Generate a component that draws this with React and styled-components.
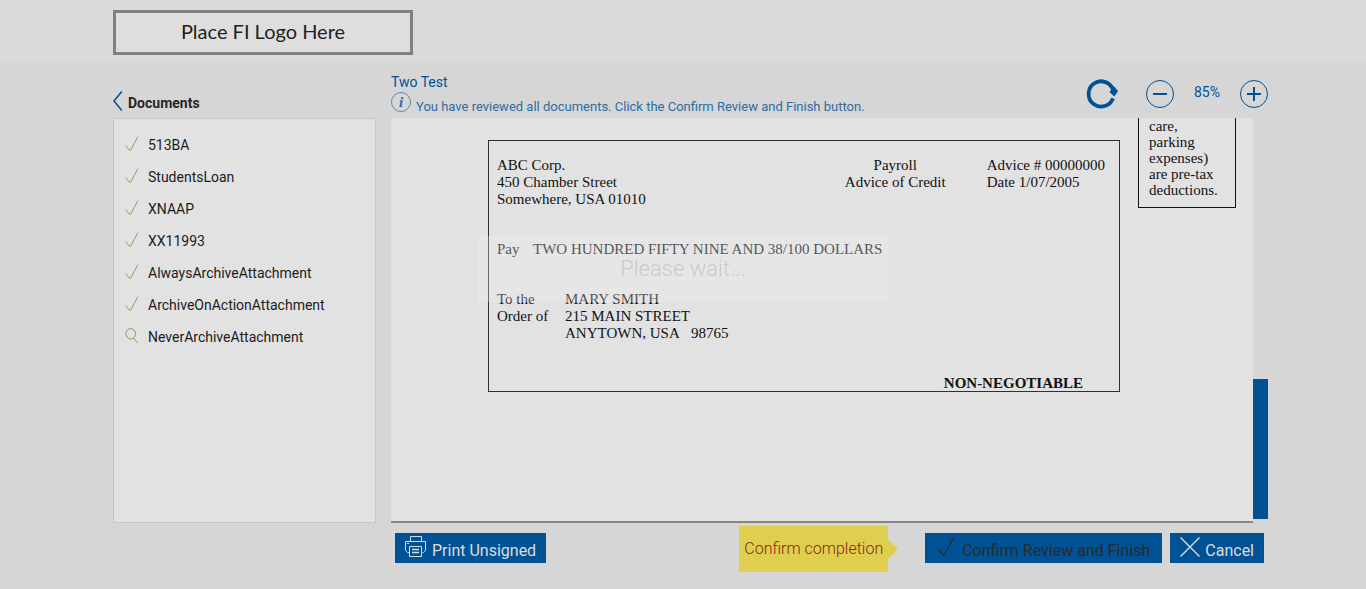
import React, { useState } from 'react'
import styled, { createGlobalStyle } from 'styled-components'

const blue = '#005294';

const documents = [
    { name: '513BA', reviewed: true },
    { name: 'StudentsLoan', reviewed: true },
    { name: 'XNAAP', reviewed: true },
    { name: 'XX11993', reviewed: true },
    { name: 'AlwaysArchiveAttachment', reviewed: true },
    { name: 'ArchiveOnActionAttachment', reviewed: true },
    { name: 'NeverArchiveAttachment', reviewed: false },
];

function CheckIcon({ width, height, color }) {
    return (
        <svg width={width} height={height} viewBox="0 0 14 16" fill="none" stroke={color} aria-hidden="true">
            <path d="M0.7 9.7 L5.2 14.8 L13 0.5" />
        </svg>
    )
}

function SearchIcon() {
    return (
        <svg width="14" height="16" viewBox="0 0 14 16" fill="none" stroke="#7fa253" aria-hidden="true">
            <ellipse cx="5.7" cy="5.8" rx="4.8" ry="5.2" />
            <path d="M8.6 10.2 L12.6 15.2" />
        </svg>
    )
}

function PrintIcon() {
    return (
        <svg width="22" height="22" viewBox="0 0 22 22" fill="none" stroke="#cfdbe5" aria-hidden="true">
            <path d="M5.5 5.5 V0.5 H16.5 V5.5" />
            <path d="M4.5 16.5 H2.5 L0.5 14.5 V5.5 H20.5 V14.5 L18.5 16.5 H17.5" />
            <path d="M4.5 20.5 V10.5 H16.5 V20.5 Z" />
            <path d="M7 13.5 H14 M7 16.5 H14" strokeWidth="1.3" />
            <path d="M2 7.5 H4" />
        </svg>
    )
}

function ReviewPage() {
    const [zoom, setZoom] = useState(85);

    return (
        <Page>
            <Header>
                <Container>
                    <Logo>Place FI Logo Here</Logo>
                </Container>
            </Header>
            <Container>
                <Columns>
                    <Sidebar>
                        <SidebarTitle>
                            <BackButton type="button" aria-label="Back">
                                <svg width="10" height="20" viewBox="0 0 10 20" fill="none" stroke={blue} strokeWidth="1.5">
                                    <path d="M8.8 0.5 L1 10 L8.8 19.5" />
                                </svg>
                            </BackButton>
                            <h2>Documents</h2>
                        </SidebarTitle>
                        <DocumentList>
                            {documents.map(doc => (
                                <li key={doc.name}>
                                    <DocumentLink href="#">
                                        {doc.reviewed ? <CheckIcon width="14" height="16" color="#82a858" /> : <SearchIcon />}
                                        <span>{doc.name}</span>
                                    </DocumentLink>
                                </li>
                            ))}
                        </DocumentList>
                    </Sidebar>

                    <Viewer>
                        <ViewerHeader>
                            <div>
                                <ViewerTitle>Two Test</ViewerTitle>
                                <Message>
                                    <InfoIcon>i</InfoIcon>
                                    <p>You have reviewed all documents. Click the Confirm Review and Finish button.</p>
                                </Message>
                            </div>
                            <Tools>
                                <RefreshButton type="button" aria-label="Rotate">
                                    <svg width="32" height="30" viewBox="0 0 32 30" fill="none">
                                        <path d="M27 10.5 A12.6 12.6 0 1 0 27 19.3" stroke={blue} strokeWidth="3.8" />
                                        <path d="M23.4 13 L28.2 7.6 L32 12 L28.4 17.4 Z" fill={blue} />
                                    </svg>
                                </RefreshButton>
                                <RoundButton type="button" aria-label="Zoom out" onClick={() => setZoom(zoom - 5)}>
                                    <svg width="14" height="14" stroke={blue} strokeWidth="2"><path d="M0 7 H14" /></svg>
                                </RoundButton>
                                <ZoomValue>{zoom}%</ZoomValue>
                                <RoundButton type="button" aria-label="Zoom in" onClick={() => setZoom(zoom + 5)}>
                                    <svg width="14" height="14" stroke={blue} strokeWidth="2"><path d="M0 7 H14 M7 0 V14" /></svg>
                                </RoundButton>
                            </Tools>
                        </ViewerHeader>

                        <ViewerBody>
                            <Paper>
                                <Check>
                                    <CheckTop>
                                        <Company>ABC Corp.<br />450 Chamber Street<br />Somewhere, USA 01010</Company>
                                        <CheckKind>Payroll<br />Advice of Credit</CheckKind>
                                        <div>Advice # 00000000<br />Date 1/07/2005</div>
                                    </CheckTop>
                                    <CheckRow $label="36px">
                                        <div>Pay</div>
                                        <div>TWO HUNDRED FIFTY NINE AND 38/100 DOLLARS</div>
                                    </CheckRow>
                                    <CheckRow $label="68px">
                                        <div>To the<br />Order of</div>
                                        <div>MARY SMITH<br />215 MAIN STREET<br />ANYTOWN, USA&nbsp;&nbsp; 98765</div>
                                    </CheckRow>
                                    <NonNegotiable>NON-NEGOTIABLE</NonNegotiable>
                                </Check>
                                <SideNote>care,<br />parking<br />expenses)<br />are pre-tax<br />deductions.</SideNote>
                            </Paper>
                            <ScrollTrack>
                                <ScrollThumb />
                            </ScrollTrack>
                        </ViewerBody>

                        <Actions>
                            <ActionButton type="button">
                                <PrintIcon />
                                <span>Print Unsigned</span>
                            </ActionButton>
                            <ActionGroup>
                                <ConfirmWrapper>
                                    <Tooltip role="tooltip">Confirm completion</Tooltip>
                                    <ActionButton type="button" $dark>
                                        <CheckIcon width="18" height="20" color="#2b2b2b" />
                                        <span>Confirm Review and Finish</span>
                                    </ActionButton>
                                </ConfirmWrapper>
                                <ActionButton type="button">
                                    <svg width="20" height="20" viewBox="0 0 20 20" stroke="#dddddd" strokeWidth="1.4" aria-hidden="true">
                                        <path d="M0.5 0.5 L19.5 19.5 M19.5 0.5 L0.5 19.5" />
                                    </svg>
                                    <span>Cancel</span>
                                </ActionButton>
                            </ActionGroup>
                        </Actions>
                    </Viewer>
                </Columns>
            </Container>
            <WaitBox role="status">Please wait...</WaitBox>
        </Page>
    )
}

function App() {
    return (
        <>
            <GlobalStyle />
            <ReviewPage />
        </>
    )
}

const GlobalStyle = createGlobalStyle`
    * {
        box-sizing: border-box;
    }
    body {
        margin: 0;
        background: #d6d6d6;
        font-family: Roboto, "Liberation Sans", sans-serif;
    }
    button {
        font-family: inherit;
        border: none;
        padding: 0;
        cursor: pointer;
    }
    svg {
        display: block;
        flex-shrink: 0;
    }
`;

const Page = styled.div`
    min-height: 100vh;
    background: #d6d6d6;
`;

const Container = styled.div`
    max-width: 1170px;
    margin: 0 auto;
    padding-left: 15px;
`;

const Header = styled.header`
    background: #dadada;
    padding: 10px 0 7px;
`;

const Logo = styled.div`
    display: flex;
    align-items: center;
    justify-content: center;
    width: 300px;
    height: 45px;
    padding-bottom: 4px;
    border: 3px solid #808080;
    background: #dedede;
    color: #231f20;
    font-family: Lato, sans-serif;
    font-size: 20px;
`;

const Columns = styled.div`
    display: grid;
    grid-template-columns: 263px 1fr;
    gap: 15px;
`;

const Sidebar = styled.aside`
    display: flex;
    flex-direction: column;
    padding-bottom: 50px;
`;

const SidebarTitle = styled.div`
    display: flex;
    align-items: flex-end;
    gap: 5px;
    height: 56px;
    padding-bottom: 7px;
    h2{
        margin: 0;
        color: #262626;
        font-size: 14px;
        line-height: 16px;
        font-weight: 700;
    }
`;

const BackButton = styled.button`
    background: none;
`;

const DocumentList = styled.ul`
    flex: 1;
    margin: 0;
    padding: 10px 11px;
    list-style: none;
    border: 1px solid #c6c6c6;
    background: #e2e2e2;
`;

const DocumentLink = styled.a`
    display: flex;
    align-items: center;
    gap: 9px;
    height: 32px;
    color: #1c1c1c;
    font-size: 14px;
    text-decoration: none;
    svg{
        margin-bottom: 2px;
    }
`;

const Viewer = styled.main`
    min-width: 0;
`;

const ViewerHeader = styled.div`
    display: flex;
    justify-content: space-between;
    height: 56px;
    padding-top: 12px;
    color: ${blue};
`;

const ViewerTitle = styled.h1`
    margin: 0;
    font-size: 14px;
    line-height: 16px;
    font-weight: 400;
`;

const Message = styled.div`
    display: flex;
    gap: 5px;
    color: #2f6ba3;
    font-size: 13px;
    line-height: 16px;
    padding-top: 2px;
    p{
        margin: 0;
        padding-top: 7px;
    }
`;

const InfoIcon = styled.span`
    display: flex;
    align-items: center;
    justify-content: center;
    width: 20px;
    height: 20px;
    border: 1px solid #5b87b3;
    border-radius: 50%;
    font-family: "Liberation Serif", serif;
    font-size: 15px;
    font-style: italic;
    font-weight: 700;
`;

const Tools = styled.div`
    display: flex;
    align-items: center;
    gap: 20px;
    height: 40px;
`;

const RefreshButton = styled.button`
    background: none;
    margin-right: 8px;
`;

const RoundButton = styled.button`
    display: flex;
    align-items: center;
    justify-content: center;
    width: 28px;
    height: 28px;
    border: 1px solid ${blue};
    border-radius: 50%;
    background: none;
`;

const ZoomValue = styled.span`
    font-size: 14px;
    line-height: 16px;
    padding-bottom: 4px;
`;

const ViewerBody = styled.div`
    display: flex;
    height: 405px;
`;

const Paper = styled.div`
    flex: 1;
    display: flex;
    align-items: flex-start;
    gap: 18px;
    padding: 0 17px 0 97px;
    border-bottom: 2px solid #868886;
    background: #e2e2e2;
    color: #111111;
    font-family: "Liberation Serif", serif;
    font-size: 15px;
    line-height: 17px;
`;

const Check = styled.section`
    flex: 1;
    display: flex;
    flex-direction: column;
    gap: 33px;
    height: 252px;
    margin-top: 22px;
    padding: 16px 14px 0 8px;
    border: 1px solid #303030;
`;

const CheckTop = styled.div`
    display: flex;
    gap: 41px;
`;

const Company = styled.div`
    flex: 1;
`;

const CheckKind = styled.div`
    text-align: center;
`;

const CheckRow = styled.div`
    display: grid;
    grid-template-columns: ${props => props.$label} 1fr;
`;

const NonNegotiable = styled.strong`
    align-self: flex-end;
    padding-right: 22px;
`;

const SideNote = styled.section`
    width: 98px;
    height: 90px;
    padding-left: 10px;
    border: 1px solid #111111;
    border-top: none;
    line-height: 16px;
`;

const ScrollTrack = styled.div`
    display: flex;
    align-items: flex-end;
    width: 15px;
    padding-bottom: 4px;
`;

const ScrollThumb = styled.div`
    width: 100%;
    height: 140px;
    background: ${blue};
`;

const Actions = styled.div`
    display: flex;
    justify-content: space-between;
    padding: 10px 4px;
`;

const ActionGroup = styled.div`
    display: flex;
    gap: 8px;
`;

const ConfirmWrapper = styled.div`
    position: relative;
`;

const ActionButton = styled.button`
    display: flex;
    align-items: center;
    gap: ${props => props.$dark ? '7px' : '5px'};
    height: 30px;
    padding: 0 ${props => props.$dark ? '12px' : '10px'};
    background: ${blue};
    color: ${props => props.$dark ? '#2b2b2b' : '#dddddd'};
    font-size: 16px;
    line-height: 20px;
    svg{
        margin-bottom: 2px;
    }
    span{
        padding-top: 5px;
    }
`;

const Tooltip = styled.div`
    position: absolute;
    right: 100%;
    top: -7px;
    margin-right: 37px;
    padding: 0 5px;
    background: #e0cf4f;
    color: #84271b;
    font-size: 16px;
    font-weight: 300;
    line-height: 46px;
    white-space: nowrap;
    &::after{
        content: '';
        position: absolute;
        left: 100%;
        top: 13px;
        border: 10px solid transparent;
        border-left-color: #e0cf4f;
        border-right: none;
    }
`;

const WaitBox = styled.div`
    position: fixed;
    top: 236px;
    left: 35%;
    right: 35%;
    height: 66px;
    background: rgba(240, 240, 240, 0.3);
    color: #c9c9c9;
    font-size: 22px;
    font-weight: 300;
    line-height: 66px;
    text-align: center;
`;

export default App
